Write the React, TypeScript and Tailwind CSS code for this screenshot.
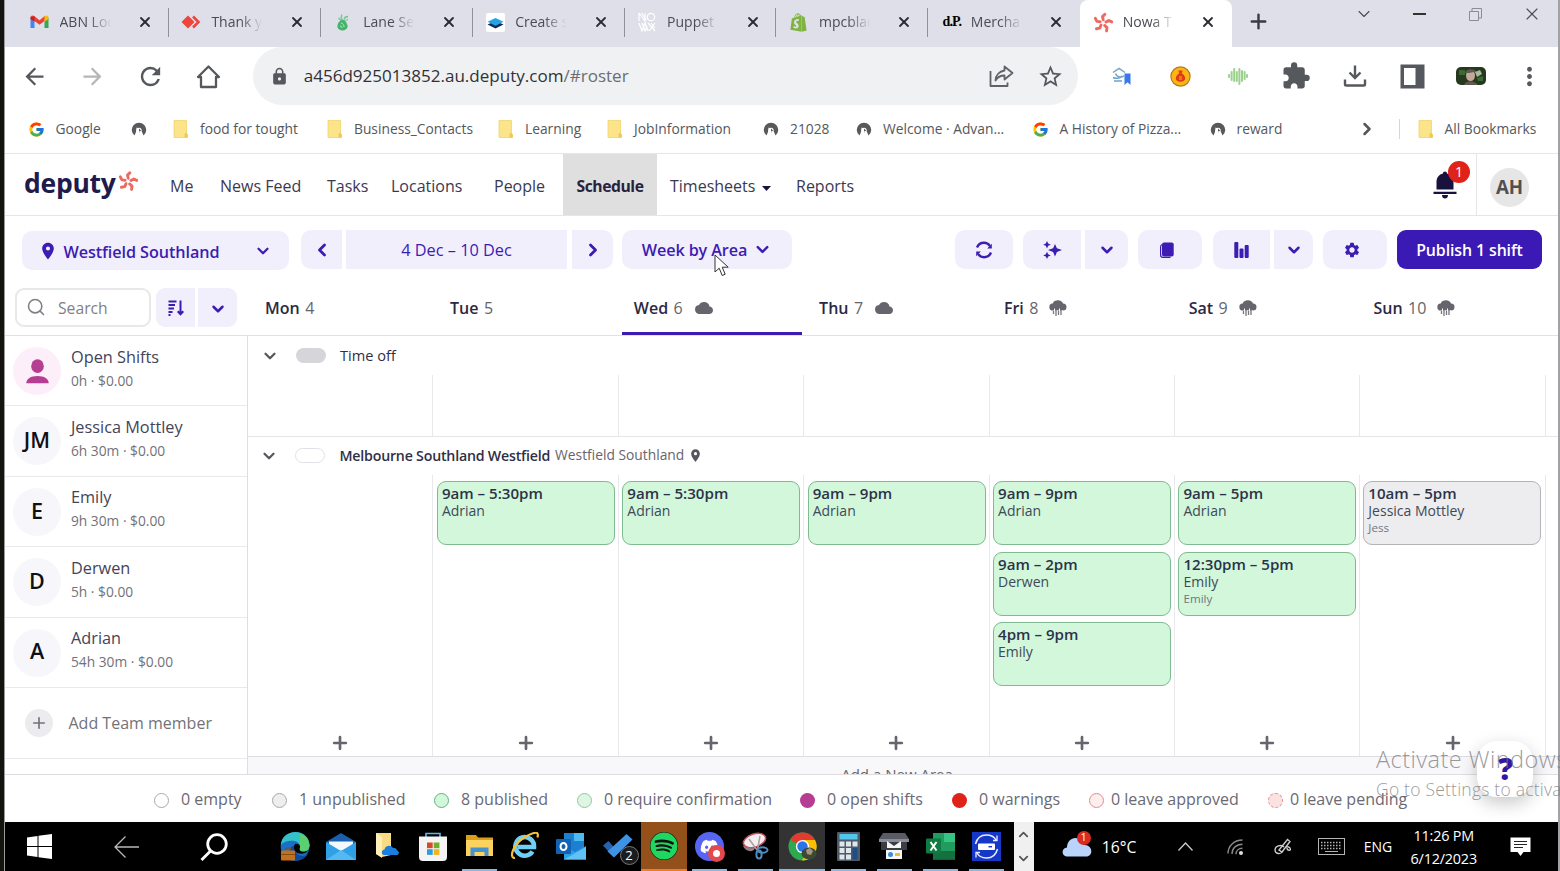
import type { ReactNode } from "react";
import { FcGoogle } from "react-icons/fc";
import { FaSpotify, FaDiscord, FaShopify } from "react-icons/fa";
import {
  MdArrowBack,
  MdArrowForward,
  MdCloud,
  MdExtension,
  MdLocationOn,
  MdLock,
  MdMoreVert,
  MdRefresh,
  MdSettings,
  MdStarOutline,
} from "react-icons/md";
import { Search, X, Plus, ChevronDown, ChevronLeft, ChevronRight, ChevronUp } from "lucide-react";

/* ---------- icons ---------- */

function Burst({ size, color }: { size: number; color: string }) {
  return (
    <svg width={size} height={size} viewBox="0 0 24 24" fill="none" stroke={color} strokeWidth="3.500" strokeLinecap="round" strokeLinejoin="round">
      {[4, 76, 148, 220, 292].map((a) => (
        <path key={a} d="M13.500 1.900 10.900 5 12 8.700" transform={`rotate(${a} 12 12.400)`} />
      ))}
    </svg>
  );
}

function HomeOutline() {
  return (
    <svg width="25" height="25" viewBox="0 0 25 25" fill="none" stroke="#55585d" strokeWidth="2.300" strokeLinejoin="round">
      <path d="M2 13 12.500 2.500 23 13h-3v10H5V13z" />
    </svg>
  );
}

function Gmail() {
  return (
    <svg width="19" height="14" viewBox="0 0 19 14">
      <path d="M0.5 2.5V13h4V6z" fill="#4285f4" />
      <path d="M18.5 2.5V13h-4V6z" fill="#34a853" />
      <path d="M0.5 2.4C0.5.6 2.6-.3 4.2 1l5.3 4.2L14.8 1c.4 1 .2 3-.3 5L9.5 9.8 4.5 6 .5 3.6z" fill="#ea4335" />
      <path d="M14.5 1.2C16.4-.3 18.5.6 18.5 2.6V4l-4 2.8z" fill="#fbbc04" />
      <path d="M.5 2.5V4l4 2.8V1.2z" fill="#c5221f" />
    </svg>
  );
}

function AnyDesk() {
  return (
    <svg width="20" height="14" viewBox="0 0 20 14">
      <path d="M7 0.5 13.5 7 7 13.5.5 7z" fill="#ef443b" />
      <path d="M12 1.5 17.5 7 12 12.5" fill="none" stroke="#ef443b" strokeWidth="2.6" />
    </svg>
  );
}

function Pear() {
  return (
    <svg width="14" height="17" viewBox="0 0 14 17">
      <path d="M4 7C5.500 5 9 5.500 10 8s2 3 1.500 5.200S8.500 16.600 6 16.400 1.200 14.500 1.400 12 2.500 8.500 4 7z" fill="#45b36b" />
      <path d="M6 6C5 4 5 2 6 .5M8 5.500C8.500 3.500 10 2.500 12 2.500M5 6.500 2.500 4M9.500 6.500 12 5.500" stroke="#6cc98c" fill="none" strokeWidth="1.300" />
      <path d="M5 9c2 .5 3 2 3 4M4 12c1 0 2 1 2 2" stroke="#bfe8cc" fill="none" />
    </svg>
  );
}

function Stack() {
  return (
    <svg width="19" height="19" viewBox="0 0 19 19">
      <rect width="19" height="19" rx="2" fill="#fff" />
      <path d="M9.500 8 17.500 11.500 9.500 15.500 1.500 11.500z" fill="#142a4f" />
      <path d="M9.500 5 17.500 8.800 9.500 12.800 1.500 8.800z" fill="#22a3e6" />
    </svg>
  );
}

function Monogram() {
  return (
    <svg width="18" height="20" viewBox="0 0 18 20" fill="none" stroke="#fff" strokeWidth="1.200">
      <path d="M1 1v8M1 1l6 8V1M3.500 1l5 7" />
      <circle cx="13" cy="5" r="3.700" />
      <path d="M1 11l3 8 3-8 3 8M4 11l3 8 2-5M10 11l7 8M17 11l-6 8M13 11l4 5" />
    </svg>
  );
}

function Badge() {
  return (
    <svg width="16" height="16" viewBox="0 0 16 16">
      <path d="M3.500 14.500A7.200 7.200 0 1 1 12.500 14.500L10.800 10.500 8.500 12 8 7.500 5.500 6.500 5 11z" fill="#57595d" />
      <path d="M5.500 13V9.500a2.700 2.700 0 0 1 5.200-1V13L8.500 11.500z" fill="#fff" />
      <path d="M8 7.500 10.300 9.800 8 10.500z" fill="#57595d" />
    </svg>
  );
}

function Folder() {
  return (
    <svg width="16" height="18" viewBox="0 0 16 18">
      <path d="M1 .5h12.500v13l1 1v3H1z" fill="#fce48a" stroke="#f1d36c" strokeWidth=".8" />
      <path d="M11.500 17.500v-3.500l1.500-1.500 1.700 1.700v3.300z" fill="#efc958" />
    </svg>
  );
}

function Share() {
  return (
    <svg width="25" height="23" viewBox="0 0 25 23" fill="none" stroke="#5f6368" strokeWidth="1.800" strokeLinejoin="round">
      <path d="M1.500 6v15h17v-3.500" />
      <path d="M15.500 1.500 23.500 8l-8 6.500v-4c-4 0-7 1.500-9 5 0-5 3.500-9 9-10z" />
    </svg>
  );
}

function ScholarExt() {
  return (
    <svg width="20" height="19" viewBox="0 0 20 19" fill="none">
      <path d="M1 5.500 7 1.500l6 4M3.500 6.500c1 3.500 5 4.500 8.500 2.500M1 10.500c3 1.500 7 1 9-1.500M2 14h8" stroke="#6fa3c7" strokeWidth="1.500" />
      <path d="M12.500 6.500h6V18l-3-2.800-3 2.800z" fill="#3b78e7" />
    </svg>
  );
}

function CoinExt() {
  return (
    <svg width="21" height="21" viewBox="0 0 21 21">
      <circle cx="10.500" cy="10.500" r="9.600" fill="#fbb615" stroke="#b7791a" strokeWidth="1.200" />
      <path d="M8.300 4.500h4.400l-1 2.700c2 1 3.500 3 3.500 5.300 0 2-1.800 3.200-4.700 3.200s-4.700-1.200-4.700-3.200c0-2.300 1.500-4.300 3.500-5.300z" fill="#e2391b" />
      <path d="M9 11h3M9 13h3" stroke="#fbb615" />
    </svg>
  );
}

function WaveExt() {
  return (
    <svg width="20" height="18" viewBox="0 0 20 18" stroke="#9bd18b" strokeWidth="2" strokeLinecap="round">
      <path d="M1 8v2M3.600 5v8M6.200 2v12M8.800 5v9M11.400 2v15M14 4v10M16.600 5v7M19 8v2" />
    </svg>
  );
}

function DownloadTray() {
  return (
    <svg width="24" height="24" viewBox="0 0 24 24" fill="none" stroke="#55585d" strokeWidth="2.400">
      <path d="M12 1.500v12M6.500 8.500 12 14l5.500-5.500M2 15.500v4.700c0 .8.500 1.300 1.300 1.300h17.400c.8 0 1.300-.5 1.300-1.300v-4.700" />
    </svg>
  );
}

function SidePanel() {
  return (
    <svg width="25" height="25" viewBox="0 0 25 25">
      <path d="M.5.500h24v24H.5zM4 4v17h11.500V4z" fill="#55585f" fillRule="evenodd" />
    </svg>
  );
}

function Avatar() {
  return (
    <svg width="30" height="18" viewBox="0 0 30 18">
      <rect width="30" height="18" rx="5" fill="#26391f" />
      <path d="M3 3h6v5H3zM21 11l6-2v5h-5z" fill="#3d6a34" />
      <ellipse cx="14.500" cy="8.500" rx="4.500" ry="5.500" fill="#c2a898" />
      <path d="M9 6c1-5 10-5 12 0l-3-1-5 1zM8 18c2-5 10-5 14 0z" fill="#5e5a50" />
      <path d="M19 5l5-2 2 4-5 3z" fill="#a9b79c" />
    </svg>
  );
}

function Bell() {
  return (
    <svg width="24" height="28" viewBox="0 0 24 28" fill="#19123f">
      <path d="M12 .5c1.300 0 2 .8 2 2 4 1 6.500 4 6.500 8.500v7.500h-17V11C3.500 6.500 6 3.500 10 2.500c0-1.200.7-2 2-2z" />
      <path d="M.5 20.700h23v2.300H.5zM9 24h6c0 2.500-1.300 3.500-3 3.500s-3-1-3-3.500z" />
    </svg>
  );
}

function Sync() {
  return (
    <svg width="16" height="18" viewBox="0 0 16 18" fill="none" stroke="#3d1cb3" strokeWidth="2.400">
      <path d="M1 6.500C2.200 3.500 4.800 1.800 8 1.800c2.500 0 4.500 1 5.800 3" />
      <path d="M15 11.500c-1.200 3-3.800 4.700-7 4.700-2.500 0-4.500-1-5.800-3" />
      <path d="M15.800 2.700V7.500h-4.600zM.2 15.300V10.500h4.600z" fill="#3d1cb3" stroke="none" />
    </svg>
  );
}

function Sparkles() {
  return (
    <svg width="19" height="18" viewBox="0 0 19 18" fill="#3d1cb3">
      <path d="M12 3l1.900 4.200 5.100 1.900-5.100 1.900L12 15.500l-1.900-4.500L5 9.100l5.100-1.900z" />
      <path d="M4 .1l1.200 2.500 2.600 1.100-2.600 1.100L4 7.400l-1.200-2.600L.2 3.700l2.600-1.100zM4 10.800l1.200 2.500 2.600 1.100-2.600 1.100L4 18l-1.200-2.500-2.600-1.100 2.600-1.100z" />
    </svg>
  );
}

function Copy() {
  return (
    <svg width="14" height="16" viewBox="0 0 14 16">
      <path d="M2 2.500C.8 3 .6 4 .6 5v8c0 1.500.8 2.400 2.300 2.400h7.600" fill="none" stroke="#3d1cb3" strokeWidth="1.200" />
      <rect x="2" y=".5" width="11.700" height="14" rx="2" fill="#3d1cb3" />
    </svg>
  );
}

function Bars() {
  return (
    <svg width="15" height="16" viewBox="0 0 15 16" fill="#3d1cb3">
      <rect x=".3" y="0" width="4" height="16" rx="1" />
      <rect x="5.500" y="6.500" width="4" height="9.500" rx="1" />
      <rect x="10.700" y="3" width="4" height="13" rx="1" />
    </svg>
  );
}

function SortIcon() {
  return (
    <svg width="16" height="16" viewBox="0 0 16 16" fill="none" stroke="#3d1cb3" strokeWidth="2">
      <path d="M.5 1.500h8M.5 5h6.500M.5 8.500h5.500M.5 12h4M.5 15h2" strokeWidth="1.900" />
      <path d="M12.500.5v13.500M9.700 11.300l2.800 3 2.800-3" />
    </svg>
  );
}

function Rain() {
  return (
    <svg width="18" height="17" viewBox="0 0 18 17">
      <path d="M4 10.500a3.500 3.500 0 0 1-.3-7C4.500 1.500 6.500.3 9 .3s4.500 1.300 5 3.200a3.500 3.500 0 0 1 0 7z" fill="#66646c" />
      <path d="M5.500 8.500v6M8 10v4M10.500 8.500v7M13 10v4" stroke="#fff" strokeWidth="1" />
      <path d="M4.500 11v3M7 10v6M9.500 11v4M12 10v5" stroke="#77757d" strokeWidth="1.300" />
    </svg>
  );
}

function PersonMark() {
  return (
    <svg width="23" height="25" viewBox="0 0 23 25" fill="#b53d92">
      <ellipse cx="11.500" cy="7.200" rx="6.300" ry="6.900" />
      <path d="M.3 24.300c0-4.500 4.500-7.300 11.200-7.300s11.200 2.800 11.200 7.300z" />
    </svg>
  );
}

/* ---------- taskbar icons ---------- */

function WinLogo() {
  return (
    <svg width="25" height="25" viewBox="0 0 25 25" fill="#fff">
      <path d="M0 3.500 10.500 2v10H0zM11.500 1.800 25 0v12H11.500zM0 13h10.500v10L0 21.500zM11.500 13H25v12l-13.500-1.800z" />
    </svg>
  );
}

function Edge() {
  return (
    <svg width="30" height="29" viewBox="0 0 30 29">
      <circle cx="15" cy="14.500" r="14.300" fill="#1b6fc4" />
      <path d="M1 13C1 5 8 0 15.500 0 24 0 29.500 6 29.500 13c0 5-4 7-8 6.500-3-.4-3-2-2-3.500 1-2 0-6-5-7-5-.8-11 .5-13.500 4z" fill="#35c1c9" />
      <path d="M20 1.500c6 2 9.700 7 9.500 12.500-.3 4-4 5.700-7.800 5.500-3-.4-3-2-2-3.500z" fill="#5bd06f" />
      <path d="M17 13c-3 2-3 7 1 9.500s8 1.500 10-1C26 26 21 29 15 28.500c-6-2-8-9-4-13 1.500-1.800 4-2.800 6-2.500z" fill="#0d4a9c" />
      <path d="M15 12c3-1 5.500 1 5 3.500-.8 1.500-.5 3.500 2 4 2.500.4 4.500 0 6-1-2 3.500-7 4-10.500 2.500-3.500-2-4.500-6-2.500-9z" fill="#050505" />
      <rect x="1" y="18.500" width="14" height="10" rx="1" fill="#c2701d" />
      <path d="M5.500 18v-2h5v2M1 22.500h14" stroke="#8a4a0e" fill="none" />
    </svg>
  );
}

function Mail() {
  return (
    <svg width="30" height="27" viewBox="0 0 30 27">
      <path d="M0 9 15 0l15 9v4H0z" fill="#1a5fae" />
      <path d="M3 8.500h24V20H3z" fill="#f3f8fc" />
      <path d="M0 9l15 9 15-9v18H0z" fill="#2f9fe6" />
      <path d="M0 27 15 17l15 10z" fill="#54b9f2" />
    </svg>
  );
}

function CloudFolder() {
  return (
    <svg width="24" height="26" viewBox="0 0 24 26">
      <path d="M1 0h15v22l-9 2-6-3z" fill="#fadb83" />
      <path d="M1 0l6 4v21l-6-4z" fill="#fff0b8" />
      <path d="M9 22c-3-.3-3-5 .5-5.500.7-4 6.500-5 8.500-1.500 3-.5 4 1.500 4 2.500 3 .8 2 4.500 0 4.500z" fill="#1b7fe0" />
    </svg>
  );
}

function Store() {
  return (
    <svg width="28" height="29" viewBox="0 0 28 29">
      <path d="M7 6V1.500h14V6" stroke="#5db6f0" strokeWidth="1.600" fill="none" />
      <path d="M0 4.500h28v20c0 3-1 4.500-4 4.500H4c-3 0-4-1.500-4-4.500z" fill="#f4f4f4" />
      <path d="M8 10.500h5.700v5.700H8z" fill="#d8492a" />
      <path d="M14.700 10.500h5.700v5.700h-5.700z" fill="#6fae2c" />
      <path d="M8 17.200h5.700v5.700H8z" fill="#2f9be6" />
      <path d="M14.700 17.200h5.700v5.700h-5.700z" fill="#f2b41c" />
    </svg>
  );
}

function Explorer() {
  return (
    <svg width="27" height="23" viewBox="0 0 27 23">
      <path d="M0 0h10l2 2.500h15V8H0z" fill="#d99e1c" />
      <path d="M0 5h27v16H0z" fill="#fbd25e" />
      <path d="M4.500 21V12.500h18V21h-4v-4h-10v4z" fill="#4592cf" />
    </svg>
  );
}

function IE() {
  return (
    <svg width="30" height="28" viewBox="0 0 30 28" fill="none">
      <path d="M22.500 19.500A9.300 9.300 0 1 1 24 15H8" stroke="#6fd0f6" strokeWidth="4.600" />
      <path d="M5 26C-2 26 4 11 15 5S29-.5 27.500 5.500" stroke="#f4c03a" strokeWidth="2.200" />
    </svg>
  );
}

function Outlook() {
  return (
    <svg width="30" height="27" viewBox="0 0 30 27">
      <path d="M8 0h20v22H8z" fill="#1d7fd0" />
      <path d="M18 0h10v8H18z" fill="#4cbcf2" />
      <path d="M8 13l11 6 11-6v13.500H8z" fill="#2da0e8" />
      <path d="M8 26.500 30 14v12.500z" fill="#5fc4f5" />
      <rect x="0" y="6" width="15" height="15" rx="1" fill="#0f62b4" />
      <ellipse cx="7.500" cy="13.500" rx="3" ry="3.500" fill="none" stroke="#fff" strokeWidth="2" />
    </svg>
  );
}

function Todo() {
  return (
    <svg width="30" height="24" viewBox="0 0 30 24">
      <path d="M0 11.500 5.500 7l6 7-1 9z" fill="#2862ae" />
      <path d="M4.500 17.500 23.500 0l6 5.500-18.500 18z" fill="#3f93e4" />
    </svg>
  );
}

function Snip() {
  return (
    <svg width="27" height="28" viewBox="0 0 27 28">
      <path d="M1 14c3 6 10 7 12 2l-3-4z" fill="#8d8388" />
      <ellipse cx="12.500" cy="8.500" rx="11.500" ry="6.500" fill="#f6eef0" stroke="#c0525c" strokeWidth="1.500" transform="rotate(-18 12.500 8.500)" />
      <path d="M7 7l8 11M18 4l-2.500 14" stroke="#a7a2a6" strokeWidth="1.500" />
      <ellipse cx="20.500" cy="18" rx="5" ry="2.800" fill="none" stroke="#4d8cc4" strokeWidth="2" />
      <ellipse cx="17" cy="22.500" rx="2.600" ry="4" fill="none" stroke="#4d8cc4" strokeWidth="2" />
    </svg>
  );
}

function Chrome() {
  return (
    <svg width="29" height="29" viewBox="0 0 29 29">
      <circle cx="14.500" cy="14.500" r="14" fill="#2da94f" />
      <path d="M14.500 14.500 2.200 7.800A14 14 0 0 1 27 8H14.500z" fill="#e33b2e" />
      <path d="M14.500 8H27a14 14 0 0 1-13 20.500l6-11z" fill="#fdbd00" />
      <circle cx="14.500" cy="14.500" r="6.600" fill="#fff" />
      <circle cx="14.500" cy="14.500" r="5.200" fill="#2a73e8" />
      <ellipse cx="21" cy="21.500" rx="7.500" ry="6" fill="#3c4a32" />
      <path d="M18 18l4-2 3 3-2 4-4-1z" fill="#a79484" />
    </svg>
  );
}

function Calc() {
  return (
    <svg width="23" height="29" viewBox="0 0 23 29">
      <rect width="23" height="29" rx="1" fill="#4e5a67" />
      <path d="M2.500 2h18v5.500h-18z" fill="#53c6ec" />
      <path d="M2.500 9.500h5v5h-5zM9 9.500h5v5H9zM15.500 9.500h5v5h-5zM2.500 16h5v5h-5zM9 16h5v5H9zM2.500 22.500h5v5h-5zM9 22.500h5v5H9z" fill="#dfe6ec" />
      <path d="M15.500 16h5v11.500h-5z" fill="#1f4d84" />
    </svg>
  );
}

function Scanner() {
  return (
    <svg width="30" height="26" viewBox="0 0 30 26">
      <path d="M4 0h22l4 6H0z" fill="#595c66" />
      <path d="M0 6h30v3H0z" fill="#8b8e96" />
      <path d="M2 9h26v8H2z" fill="#3b3d44" />
      <path d="M8 8l7 5 7-5v7H8z" fill="#f5f5f5" />
      <path d="M7 17h16v9H7z" fill="#f5f5f5" />
      <circle cx="11.500" cy="21.500" r="2.500" fill="#3f88d6" />
      <path d="M16 20h5v3h-5z" fill="#f0b93a" />
    </svg>
  );
}

function Excel() {
  return (
    <svg width="29" height="27" viewBox="0 0 29 27">
      <path d="M7 0h22v26.500H7z" fill="#1f9c5e" />
      <path d="M18 0h11v9H18z" fill="#35c481" />
      <path d="M7 18h22v8.500H7z" fill="#14713f" />
      <rect x="0" y="5.500" width="15" height="15" rx="1" fill="#0f7a41" />
      <path d="M4.500 9l6 8.500M10.500 9l-6 8.500" stroke="#fff" strokeWidth="2" />
    </svg>
  );
}

function RemoteApp() {
  return (
    <svg width="29" height="29" viewBox="0 0 29 29" fill="none">
      <path d="M0 0h29v29H0z" fill="#1538c8" />
      <path d="M3.500 12C5 6 9 3 14.500 3c4 0 7.500 1.500 9.500 5M25.500 17c-1.500 6-5.500 9-11 9-4 0-7.500-1.500-9.500-5" stroke="#e9edff" strokeWidth="1.500" />
      <path d="M25 3.500v5h-4M4 25.500v-5h4" stroke="#e9edff" strokeWidth="1.300" />
      <rect x="6" y="11.500" width="17" height="6.500" rx="1" fill="#fff" />
      <path d="M16.500 14.700h3.500" stroke="#1538c8" strokeWidth="1.500" />
    </svg>
  );
}

/* ---------- browser ---------- */

const fade = "[mask-image:linear-gradient(to_right,black_55%,transparent_97%)]";

const tabs: { icon: ReactNode; title: string }[] = [
  { icon: <Gmail />, title: "ABN Loo" },
  { icon: <AnyDesk />, title: "Thank yo" },
  { icon: <Pear />, title: "Lane Ser" },
  { icon: <Stack />, title: "Create s" },
  { icon: <Monogram />, title: "Puppet" },
  { icon: <FaShopify size={19} color="#7fb441" />, title: "mpcblac" },
  {
    icon: <span className="pl-[2px] font-['Liberation_Serif',serif] text-[14px] font-bold tracking-[-0.800px] text-black">d.P.</span>,
    title: "Mercha",
  },
  { icon: <Burst size={21} color="#ec6a62" />, title: "Nowa T" },
];

function TabStrip() {
  return (
    <div className="flex h-[47px] shrink-0 bg-[#dedfe8] pl-[12px]">
      {tabs.map((t, i) => {
        const active = i === tabs.length - 1;
        return (
          <div
            key={t.title}
            className={
              active
                ? "flex h-full w-[152px] shrink-0 items-center rounded-t-[8px] bg-white pb-[3px]"
                : "flex h-full w-[151.900px] shrink-0 items-center pb-[3px]"
            }
          >
            <span className="ml-[12.500px] flex w-[20px] justify-center">{t.icon}</span>
            <span className={`ml-[10px] w-[53px] overflow-hidden text-[14px] whitespace-nowrap text-[#4a4c52] ${fade}`}>{t.title}</span>
            <X size={16} strokeWidth={2.700} className="ml-[24.500px] text-[#2a2b30]" />
            {i < 6 && <span className="ml-auto h-[29px] w-px bg-[#8f9098]" />}
          </div>
        );
      })}
      <div className="flex h-[42px] flex-1 items-center">
        <Plus size={23} strokeWidth={2.500} className="ml-[15px] text-[#3a3b40]" />
        <div className="mb-[14px] ml-auto flex items-center text-[#4b4c52]">
          <ChevronDown size={20} strokeWidth={1.300} className="mr-[39px]" />
          <span className="mr-[43px] h-[1.500px] w-[13px] bg-[#333]" />
          <svg width="13" height="13" viewBox="0 0 13 13" fill="none" stroke="#8b8c94" strokeWidth="1" className="mr-[39.500px]">
            <path d="M.5 3.500h9v9h-9zM3 3.500V.5h9.500v9.500H9.500" />
          </svg>
          <X size={20} strokeWidth={1.300} className="mr-[16.500px]" />
        </div>
      </div>
    </div>
  );
}

function Cell({ children }: { children: ReactNode }) {
  return <span className="flex w-[58.200px] shrink-0 items-center justify-center">{children}</span>;
}

function AddressRow() {
  return (
    <div className="flex h-[58px] shrink-0 items-center text-[#55585d]">
      <Cell><MdArrowBack size={27} /></Cell>
      <Cell><MdArrowForward size={27} className="text-[#b5b6b9]" /></Cell>
      <Cell><MdRefresh size={29} /></Cell>
      <Cell><HomeOutline /></Cell>
      <div className="ml-[15px] flex h-full w-[825px] shrink-0 items-center rounded-full bg-[#eff1f3]">
        <MdLock size={19} className="ml-[17px]" />
        <span className="ml-[15px] text-[17.050px] text-[#303237]">
          a456d925013852.au.deputy.com<span className="text-[#6a6d72]">/#roster</span>
        </span>
        <span className="mr-[23px] ml-auto"><Share /></span>
        <MdStarOutline size={27} className="mr-[14px]" />
      </div>
      <span className="w-[15px] shrink-0" />
      <Cell><ScholarExt /></Cell>
      <Cell><CoinExt /></Cell>
      <Cell><WaveExt /></Cell>
      <Cell><MdExtension size={30} /></Cell>
      <Cell><DownloadTray /></Cell>
      <Cell><SidePanel /></Cell>
      <Cell><Avatar /></Cell>
      <Cell><MdMoreVert size={29} /></Cell>
    </div>
  );
}

function Bookmark({ w, icon, label }: { w: string; icon: ReactNode; label?: string }) {
  return (
    <span className={`flex shrink-0 items-center whitespace-nowrap ${w}`}>
      <span className="mr-[10px] flex w-[18px] justify-center">{icon}</span>
      {label}
    </span>
  );
}

function BookmarksRow() {
  return (
    <div className="flex h-[49px] shrink-0 items-center border-b border-[#e6e6ea] pl-[22.500px] text-[13.800px] text-[#55575c]">
      <Bookmark w="w-[102px]" icon={<FcGoogle size={17} />} label="Google" />
      <Bookmark w="w-[42.500px]" icon={<Badge />} />
      <Bookmark w="w-[154px]" icon={<Folder />} label="food for tought" />
      <Bookmark w="w-[171px]" icon={<Folder />} label="Business_Contacts" />
      <Bookmark w="w-[109px]" icon={<Folder />} label="Learning" />
      <Bookmark w="w-[156px]" icon={<Folder />} label="JobInformation" />
      <Bookmark w="w-[93px]" icon={<Badge />} label="21028" />
      <Bookmark w="w-[176.500px]" icon={<Badge />} label="Welcome · Advan..." />
      <Bookmark w="w-[177px]" icon={<FcGoogle size={17} />} label="A History of Pizza..." />
      <Bookmark w="w-[100px]" icon={<Badge />} label="reward" />
      <ChevronRight size={20} strokeWidth={3} className="ml-[48px]" />
      <span className="ml-[22px] h-[20px] w-px bg-[#d5d6da]" />
      <span className="w-[17px]" />
      <Bookmark w="w-[130px]" icon={<Folder />} label="All Bookmarks" />
    </div>
  );
}

/* ---------- app header ---------- */

function Nav() {
  return (
    <nav className="flex h-[62px] shrink-0 items-center border-b border-[#e6e6ea] text-[16px] text-[#3b3950] [&>span]:pt-[4px]">
      <span className="ml-[19px] flex w-[146px] items-start">
        <span className="-mt-[7px] text-[26.500px] leading-[36px] font-bold tracking-[-0.250px] text-[#211a4c]">deputy</span>
        <span className="-mt-px ml-[2px]"><Burst size={20} color="#ec6a62" /></span>
      </span>
      <span className="w-[50px]">Me</span>
      <span className="w-[107px]">News Feed</span>
      <span className="w-[64px]">Tasks</span>
      <span className="w-[103px]">Locations</span>
      <span className="w-[69px]">People</span>
      <span className="flex h-full w-[94px] items-center justify-center bg-[#dfdfdf] text-[15.700px] font-bold tracking-[-0.450px] text-[#27233f]">Schedule</span>
      <span className="ml-[13px] flex w-[126px] items-center">
        Timesheets
        <svg width="9" height="5" viewBox="0 0 9 5" className="mt-[3px] ml-[7px]"><path d="M0 0h9L4.500 5z" fill="#19123f" /></svg>
      </span>
      <span>Reports</span>
      <div className="relative ml-auto">
        <Bell />
        <span className="absolute -top-[10px] left-[15px] flex h-[22px] w-[22px] items-center justify-center rounded-full bg-[#e0231a] text-[14px] text-white">1</span>
      </div>
      <div className="ml-[19px] h-full w-px bg-[#e6e6ea]" />
      <div className="mt-[5px] mr-[29px] ml-[13px] flex h-[39px] w-[39px] items-center justify-center rounded-full bg-[#e6e6e6] text-[18.700px] font-bold text-[#505050]">AH</div>
    </nav>
  );
}

const pill = "flex h-[39px] shrink-0 items-center justify-center bg-[#f1effb] text-[#3d1cb3]";

function Controls() {
  return (
    <div className="flex h-[72px] shrink-0 pt-[14px] text-[16px]">
      <div className={`${pill} mt-px ml-[17px] w-[267px] rounded-[10px] font-semibold`}>
        <MdLocationOn size={20} className="mr-[5.500px] ml-[0.500px]" />
        <span className="w-[185px] pt-[3px] text-[16.200px] tracking-[-0.080px]">Westfield Southland</span>
        <ChevronDown size={18} strokeWidth={3} className="mr-[2px] ml-[5px]" />
      </div>
      <div className={`${pill} ml-[12px] w-[41px] rounded-l-[10px]`}><ChevronLeft size={20} strokeWidth={3.300} /></div>
      <div className={`${pill} ml-[4px] w-[221px] pt-[2px] text-[16.300px]`}>4 Dec – 10 Dec</div>
      <div className={`${pill} ml-[5px] w-[41px] rounded-r-[10px]`}><ChevronRight size={20} strokeWidth={3.300} /></div>
      <div className={`${pill} relative ml-[9px] w-[170px] rounded-[10px] text-[16.200px] font-semibold tracking-[-0.120px]`}>
        <span className="pt-[2px]">Week by Area</span>
        <ChevronDown size={19} strokeWidth={3} className="ml-[6px]" />
        <svg width="16" height="23" viewBox="0 0 16 23" className="absolute top-[24px] left-[92px]">
          <path d="M1 1v17l4.200-3.800 3 7.300 3-1.300-3-7h6z" fill="#fff" stroke="#333" strokeWidth="1" />
        </svg>
      </div>
      <div className={`${pill} ml-auto w-[58px] rounded-[10px]`}><Sync /></div>
      <div className={`${pill} ml-[10px] w-[58px] rounded-l-[10px]`}><Sparkles /></div>
      <div className={`${pill} ml-[4px] w-[43px] rounded-r-[10px]`}><ChevronDown size={18} strokeWidth={3.300} /></div>
      <div className={`${pill} ml-[10px] w-[64px] rounded-[10px] pr-[6px]`}><Copy /></div>
      <div className={`${pill} ml-[11px] w-[57px] rounded-l-[10px]`}><Bars /></div>
      <div className={`${pill} ml-[4px] w-[39px] rounded-r-[10px]`}><ChevronDown size={18} strokeWidth={3.300} /></div>
      <div className={`${pill} ml-[10px] w-[64px] rounded-[10px] pr-[6px]`}><MdSettings size={18} /></div>
      <div className="mr-[16px] ml-[10px] flex h-[39px] w-[145px] items-center justify-center rounded-[9px] bg-[#3b19b5] pt-[2px] text-[15.900px] font-semibold tracking-[-0.100px] text-white">Publish 1 shift</div>
    </div>
  );
}

const days: { d: string; n: string; wx?: "cloud" | "rain" }[] = [
  { d: "Mon", n: "4" },
  { d: "Tue", n: "5" },
  { d: "Wed", n: "6", wx: "cloud" },
  { d: "Thu", n: "7", wx: "cloud" },
  { d: "Fri", n: "8", wx: "rain" },
  { d: "Sat", n: "9", wx: "rain" },
  { d: "Sun", n: "10", wx: "rain" },
];

function DayHeader() {
  return (
    <div className="flex h-[48px] shrink-0 border-b border-[#e2e2e6] pl-[10px]">
      <div className="flex h-[39px] w-[136px] shrink-0 items-center rounded-[9px] border-2 border-[#e8e8ea] text-[15.700px] text-[#807f85]">
        <Search size={20} strokeWidth={1.900} className="mr-[12px] mb-[2px] ml-[9px]" />
        <span className="pt-[2px]">Search</span>
      </div>
      <div className={`${pill} ml-[5px] w-[39px] rounded-l-[9px]`}><SortIcon /></div>
      <div className={`${pill} ml-[3px] w-[39px] rounded-r-[9px] pt-[2px]`}><ChevronDown size={18} strokeWidth={3.300} /></div>
      <div className="ml-[5px] flex">
        {days.map((x) => (
          <div
            key={x.d}
            className={
              x.d === "Wed"
                ? "mr-[4.800px] flex h-[47px] w-[180px] border-b-[3px] border-[#3d1cb3] pl-[11.500px]"
                : x.d === "Tue"
                  ? "flex h-[47px] w-[184.300px] pl-[12px]"
                  : x.d === "Mon"
                    ? "flex h-[47px] w-[196px] pl-[23px]"
                    : "flex h-[47px] w-[184.800px] pl-[12px]"
            }
          >
            <span className="flex h-[40px] items-center text-[16px] font-semibold text-[#2b2942]">
              <span className="pt-[2px]">{x.d}</span>
              <span className="ml-[5.500px] pt-[2px] font-normal text-[#66646c]">{x.n}</span>
              {x.wx === "cloud" && <MdCloud size={18} className="ml-[12px] text-[#66646c]" />}
              {x.wx === "rain" && <span className="ml-[11px]"><Rain /></span>}
            </span>
          </div>
        ))}
      </div>
    </div>
  );
}

/* ---------- roster ---------- */

const team = [
  { initials: "", name: "Open Shifts", hours: "0h · $0.00" },
  { initials: "JM", name: "Jessica Mottley", hours: "6h 30m · $0.00" },
  { initials: "E", name: "Emily", hours: "9h 30m · $0.00" },
  { initials: "D", name: "Derwen", hours: "5h · $0.00" },
  { initials: "A", name: "Adrian", hours: "54h 30m · $0.00" },
];

function Sidebar() {
  return (
    <aside className="flex w-[243px] shrink-0 flex-col border-r border-[#dddde2]">
      {team.map((m) => (
        <div key={m.name} className="flex h-[70.400px] shrink-0 border-b border-[#e9e9ed] pl-[8px]">
          <span
            className={
              m.initials
                ? "mt-[11px] flex h-[48px] w-[48px] items-center justify-center rounded-full bg-[#f7f7fb] pb-[3px] text-[21.500px] font-semibold text-[#101014]"
                : "mt-[11px] flex h-[48px] w-[48px] items-center justify-center rounded-full bg-[#fdeff9]"
            }
          >
            {m.initials || <PersonMark />}
          </span>
          <span className="mt-[8.500px] ml-[10px] flex flex-col">
            <span className="text-[16.300px] leading-[24px] text-[#454358]">{m.name}</span>
            <span className="text-[13.750px] leading-[24px] text-[#737279]">{m.hours}</span>
          </span>
        </div>
      ))}
      <div className="flex h-[71px] shrink-0 items-center border-b border-[#e9e9ed] pl-[20px] text-[16px] text-[#737279]">
        <span className="mr-[15.500px] flex h-[28px] w-[28px] items-center justify-center rounded-full bg-[#ececee]">
          <Plus size={18} strokeWidth={2.200} />
        </span>
        <span className="pt-[2px]">Add Team member</span>
      </div>
    </aside>
  );
}

type Shift = { time: string; who: string; note?: string; draft?: boolean };

const shifts: Shift[][] = [
  [],
  [{ time: "9am – 5:30pm", who: "Adrian" }],
  [{ time: "9am – 5:30pm", who: "Adrian" }],
  [{ time: "9am – 9pm", who: "Adrian" }],
  [
    { time: "9am – 9pm", who: "Adrian" },
    { time: "9am – 2pm", who: "Derwen" },
    { time: "4pm – 9pm", who: "Emily" },
  ],
  [
    { time: "9am – 5pm", who: "Adrian" },
    { time: "12:30pm – 5pm", who: "Emily", note: "Emily" },
  ],
  [{ time: "10am – 5pm", who: "Jessica Mottley", note: "Jess", draft: true }],
];

function ShiftCard({ s }: { s: Shift }) {
  return (
    <div
      className={
        s.draft
          ? "mb-[6.500px] ml-[3px] flex h-[64px] w-[178px] flex-col rounded-[9px] border-[1.500px] border-[#b4b3b8] bg-[#ededef] pt-[3px] pl-[4px]"
          : "mb-[6.500px] ml-[3.500px] flex h-[64px] w-[178px] flex-col rounded-[9px] border-[1.500px] border-[#7fba90] bg-[#d2f7db] pt-[3px] pl-[4px]"
      }
    >
      <span className="text-[15.100px] leading-[17px] font-semibold text-[#2b3347]">{s.time}</span>
      <span className="text-[14px] leading-[17px] text-[#3d4a58]">{s.who}</span>
      {s.note && <span className="text-[11.600px] leading-[18px] text-[#71767f]">{s.note}</span>}
    </div>
  );
}

function Grid() {
  return (
    <main className="flex min-w-0 flex-1 flex-col overflow-hidden">
      <div className="flex h-[39px] shrink-0 items-center text-[14.600px] font-medium text-[#312f47]">
        <ChevronDown size={18} strokeWidth={3} className="ml-[13px] text-[#57565e]" />
        <span className="mr-[14px] ml-[17px] h-[15px] w-[30px] rounded-full bg-[#d6d5da]" />
        Time off
      </div>
      <div className="flex h-[62px] shrink-0 border-b border-[#e6e6ea]">
        {days.map((x) => (
          <div key={x.d} className="w-[185.400px] shrink-0 border-r border-[#e9e9ed]" />
        ))}
      </div>
      <div className="flex h-[38px] shrink-0 items-center pb-px text-[#312f47]">
        <ChevronDown size={18} strokeWidth={3} className="ml-[12px] text-[#57565e]" />
        <span className="mr-[14.500px] ml-[17px] h-[15px] w-[30px] rounded-full border-[1.500px] border-[#e2e2e6]" />
        <span className="text-[14.200px] font-semibold tracking-[-0.210px]">Melbourne Southland Westfield</span>
        <span className="ml-[5px] text-[13.800px] text-[#66646c]">Westfield Southland</span>
        <MdLocationOn size={15} className="ml-[4px] text-[#57565e]" />
      </div>
      <div className="flex h-[282px] shrink-0 border-b border-[#dddde2]">
        {shifts.map((list, i) => (
          <div key={days[i].d} className="flex w-[185.400px] shrink-0 flex-col border-r border-[#e9e9ed] pt-[6px]">
            {list.map((s) => (
              <ShiftCard key={s.time} s={s} />
            ))}
            <Plus size={20} strokeWidth={3.200} className="mx-auto mt-auto mb-[3px] text-[#66656d]" />
          </div>
        ))}
      </div>
      <div className="flex flex-1 justify-center overflow-hidden bg-[#f8f8fb] pt-[7px] text-[15px] leading-[20px] text-[#66646c]">
        <span className="pr-[12px]">Add a New Area</span>
      </div>
    </main>
  );
}

const legend = [
  { w: "w-[118px]", dot: "border-[1.500px] border-[#a9a8ae] bg-white", label: "0 empty" },
  { w: "w-[162px]", dot: "border-[1.500px] border-[#a9a8ae] bg-[#eeeeef]", label: "1 unpublished" },
  { w: "w-[143px]", dot: "border-[1.500px] border-[#62b47a] bg-[#d2f7db]", label: "8 published" },
  { w: "w-[223px]", dot: "border-[1.500px] border-[#8cc99c] bg-[#e0f6e5]", label: "0 require confirmation" },
  { w: "w-[152px]", dot: "bg-[#b53d92]", label: "0 open shifts" },
  { w: "w-[137px]", dot: "bg-[#e0231a]", label: "0 warnings" },
  { w: "w-[179px]", dot: "border-[1.500px] border-[#e58b8b] bg-[#fdeeee]", label: "0 leave approved" },
  { w: "w-[150px]", dot: "border-[1.500px] border-dashed border-[#e58b8b] bg-[#fbe2e2]", label: "0 leave pending" },
];

function Legend() {
  return (
    <div className="flex h-[48px] shrink-0 items-center border-t border-[#dddde2] pt-[3px] pl-[149px] text-[16px] text-[#6a6972]">
      {legend.map((l, i) => (
        <span key={l.label} className={`flex shrink-0 items-center whitespace-nowrap ${l.w}`}>
          <span className={`h-[15px] w-[15px] shrink-0 rounded-full ${i > 5 ? "mr-[7px]" : "mr-[12px]"} ${l.dot}`} />
          {l.label}
        </span>
      ))}
    </div>
  );
}

/* ---------- taskbar ---------- */

function Task({ children, open, tone }: { children: ReactNode; open?: boolean; tone?: "orange" | "grey" }) {
  return (
    <span
      className={
        tone === "orange"
          ? "flex h-full w-[46.150px] shrink-0 flex-col items-center bg-[#94501a]"
          : tone === "grey"
            ? "flex h-full w-[46.150px] shrink-0 flex-col items-center bg-[#333333]"
            : "flex h-full w-[46.150px] shrink-0 flex-col items-center"
      }
    >
      <span className="flex h-[47px] flex-1 items-center justify-center pt-px">{children}</span>
      {tone ? (
        <span className={tone === "orange" ? "h-[2px] w-full bg-[#ee7d23]" : "h-[2px] w-full bg-[#8db8e0]"} />
      ) : (
        <span className={open ? "h-[2px] w-[35px] bg-[#8db8e0]" : "h-[2px]"} />
      )}
    </span>
  );
}

function Taskbar() {
  return (
    <div className="flex h-[49px] shrink-0 items-center bg-black text-[15px] text-white">
      <span className="flex w-[68px] shrink-0 justify-center"><WinLogo /></span>
      <span className="flex w-[106px] shrink-0 justify-center">
        <svg width="25" height="22" viewBox="0 0 25 22" fill="none" stroke="#b9b9b9" strokeWidth="1.300"><path d="M11.500.5 1 11l10.500 10.500M1 11h24" /></svg>
      </span>
      <span className="flex w-[69px] shrink-0 justify-center">
        <svg width="28" height="28" viewBox="0 0 28 28" fill="none" stroke="#fff" strokeWidth="2.800"><circle cx="17" cy="11" r="9.300" /><path d="M10.500 18 1.500 27" /></svg>
      </span>
      <span className="w-[23.500px] shrink-0" />
      <Task><Edge /></Task>
      <Task><Mail /></Task>
      <Task><CloudFolder /></Task>
      <Task><Store /></Task>
      <Task open><Explorer /></Task>
      <Task><IE /></Task>
      <Task><Outlook /></Task>
      <Task>
        <span className="relative"><Todo />
          <span className="absolute top-[12px] left-[17px] flex h-[19px] w-[19px] items-center justify-center rounded-full border border-[#777] bg-[#1c1c1c] text-[13px]">2</span>
        </span>
      </Task>
      <Task tone="orange"><FaSpotify size={28} color="#1fd760" className="rounded-full bg-[#121212]" /></Task>
      <Task open>
        <span className="relative flex h-[29px] w-[29px] items-center justify-center rounded-full bg-[#5865f2]">
          <FaDiscord size={19} color="#fff" />
          <span className="absolute top-[13px] left-[13px] flex h-[17px] w-[17px] items-center justify-center rounded-full bg-[#e5484d]">
            <span className="h-[7px] w-[7px] rounded-full bg-white" />
          </span>
        </span>
      </Task>
      <Task open><Snip /></Task>
      <Task tone="grey"><Chrome /></Task>
      <Task open><Calc /></Task>
      <Task open><Scanner /></Task>
      <Task open><Excel /></Task>
      <Task open><RemoteApp /></Task>
      <span className="ml-[4px] flex h-full w-[20px] shrink-0 flex-col items-center justify-between bg-[#f0f0f0] py-[5px] text-[#555]">
        <ChevronUp size={15} strokeWidth={2.800} />
        <ChevronDown size={15} strokeWidth={2.800} />
      </span>
      <span className="relative ml-[28px]">
        <svg width="30" height="20" viewBox="0 0 30 20"><path d="M6 19.500C-1 19.500-1 11 5 10.500 5 3 12-1 17 2c3 1.500 4 4 4 6 10-1.500 11 11.500 3 11.500z" fill="#b9d3fa" /></svg>
        <span className="absolute -top-[6px] left-[15px] flex h-[14px] w-[14px] items-center justify-center rounded-full bg-[#d92b20] text-[11px]">1</span>
      </span>
      <span className="ml-[10px] w-[76px] shrink-0 pt-[2px] text-[15.700px]">16°C</span>
      <svg width="15" height="9" viewBox="0 0 15 9" fill="none" stroke="#ccc" strokeWidth="1.300"><path d="M.5 8.500l7-7.500 7 7.500" /></svg>
      <svg width="17" height="16" viewBox="0 0 17 16" fill="none" stroke="#8a8a8a" strokeWidth="1.400" className="ml-[34px]">
        <path d="M1 14.500C1 7 7 1 15.500 1M5 15c0-5.500 4-9.700 10.500-9.700M9 15.300c0-3.500 2.500-6 6.500-6" />
        <circle cx="14" cy="14" r="1.300" fill="#ddd" stroke="#ddd" />
      </svg>
      <svg width="18" height="17" viewBox="0 0 18 17" fill="none" stroke="#cfcfcf" strokeWidth="1.300" className="ml-[30px]">
        <path d="M5 12 13.500 1.500l2.500 2L8 14zM10 9c-3-3-9-1-9 3 0 4 6 5 8 1 1-3 4-6 7-3 2 3-3 3-3 0" />
      </svg>
      <svg width="27" height="17" viewBox="0 0 27 17" fill="none" stroke="#b5b5b5" className="ml-[26px]">
        <rect x=".5" y=".5" width="26" height="16" />
        <path d="M3 4.500h21M3 7.500h21M3 10.500h21" strokeDasharray="1.500 1.500" strokeWidth="1.500" />
        <path d="M7 13.500h13" />
      </svg>
      <span className="ml-[19px] w-[35px] shrink-0 pt-px text-[14px]">ENG</span>
      <span className="flex w-[90px] shrink-0 flex-col items-center text-[14.400px] leading-[23px] tracking-[-0.200px]">
        <span>11:26 PM</span>
        <span>6/12/2023</span>
      </span>
      <svg width="21" height="20" viewBox="0 0 21 20" className="ml-[21px] shrink-0">
        <path d="M.5.500h20v14.500h-7L10.500 19l-3-4h-7z" fill="#fff" />
        <path d="M4 4.500h13M4 7.500h13M4 10.500h9" stroke="#222" strokeWidth="1.200" />
      </svg>
    </div>
  );
}

export default function App() {
  return (
    <div className="relative flex h-[871px] w-[1560px] overflow-hidden border-l-[4px] border-[#15130f] bg-white font-['Open_Sans','Noto_Sans',sans-serif] leading-[1.360]">
      <div className="flex w-[1556px] shrink-0 flex-col border-r-2 border-l border-r-[#a2a2a6] border-l-[#9a9a9c]">
        <TabStrip />
        <AddressRow />
        <BookmarksRow />
        <Nav />
        <Controls />
        <DayHeader />
        <div className="flex h-[438px] shrink-0 overflow-hidden">
          <Sidebar />
          <Grid />
        </div>
        <Legend />
        <Taskbar />
      </div>
      <div className="absolute top-[741px] left-[1473px] flex h-[56px] w-[56px] items-center justify-center rounded-[20px] bg-white pl-px text-[30px] font-extrabold text-[#3315a3] shadow-[0_6px_18px_rgba(0,0,0,0.22)]">?</div>
      <div className="absolute top-[743px] left-[1372px] flex flex-col whitespace-nowrap text-[#78787c]/75">
        <span className="text-[23.500px] leading-[33px] font-light tracking-[0.450px]">Activate Windows</span>
        <span className="text-[17.500px] leading-[26px] font-light tracking-[0.220px]">Go to Settings to activate Windows.</span>
      </div>
    </div>
  );
}
